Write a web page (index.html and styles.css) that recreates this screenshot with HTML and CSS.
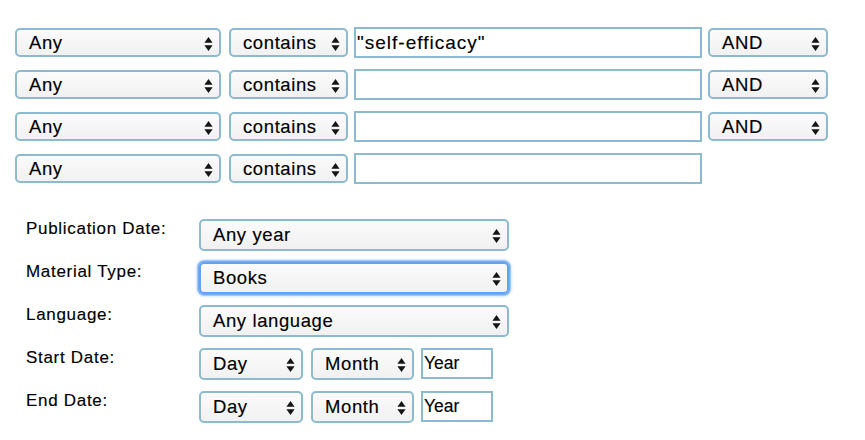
FILE: index.html
```html
<!DOCTYPE html>
<html>
<head>
<meta charset="utf-8">
<link rel="stylesheet" href="styles.css">
</head>
<body>
<div class="page">
  <div class="terms">
    <div class="row">
      <div class="sel w-field"><span>Any</span><svg class="arr" viewBox="0 0 8 13"><polygon points="0.2,5.3 4,0 7.8,5.3"/><polygon points="0.2,7.7 4,13 7.8,7.7"/></svg></div>
      <div class="sel w-op"><span>contains</span><svg class="arr" viewBox="0 0 8 13"><polygon points="0.2,5.3 4,0 7.8,5.3"/><polygon points="0.2,7.7 4,13 7.8,7.7"/></svg></div>
      <input class="txt w-term" type="text" value="&quot;self-efficacy&quot;">
      <div class="sel w-bool"><span>AND</span><svg class="arr" viewBox="0 0 8 13"><polygon points="0.2,5.3 4,0 7.8,5.3"/><polygon points="0.2,7.7 4,13 7.8,7.7"/></svg></div>
    </div>
    <div class="row">
      <div class="sel w-field"><span>Any</span><svg class="arr" viewBox="0 0 8 13"><polygon points="0.2,5.3 4,0 7.8,5.3"/><polygon points="0.2,7.7 4,13 7.8,7.7"/></svg></div>
      <div class="sel w-op"><span>contains</span><svg class="arr" viewBox="0 0 8 13"><polygon points="0.2,5.3 4,0 7.8,5.3"/><polygon points="0.2,7.7 4,13 7.8,7.7"/></svg></div>
      <input class="txt w-term" type="text" value="">
      <div class="sel w-bool"><span>AND</span><svg class="arr" viewBox="0 0 8 13"><polygon points="0.2,5.3 4,0 7.8,5.3"/><polygon points="0.2,7.7 4,13 7.8,7.7"/></svg></div>
    </div>
    <div class="row">
      <div class="sel w-field"><span>Any</span><svg class="arr" viewBox="0 0 8 13"><polygon points="0.2,5.3 4,0 7.8,5.3"/><polygon points="0.2,7.7 4,13 7.8,7.7"/></svg></div>
      <div class="sel w-op"><span>contains</span><svg class="arr" viewBox="0 0 8 13"><polygon points="0.2,5.3 4,0 7.8,5.3"/><polygon points="0.2,7.7 4,13 7.8,7.7"/></svg></div>
      <input class="txt w-term" type="text" value="">
      <div class="sel w-bool"><span>AND</span><svg class="arr" viewBox="0 0 8 13"><polygon points="0.2,5.3 4,0 7.8,5.3"/><polygon points="0.2,7.7 4,13 7.8,7.7"/></svg></div>
    </div>
    <div class="row">
      <div class="sel w-field"><span>Any</span><svg class="arr" viewBox="0 0 8 13"><polygon points="0.2,5.3 4,0 7.8,5.3"/><polygon points="0.2,7.7 4,13 7.8,7.7"/></svg></div>
      <div class="sel w-op"><span>contains</span><svg class="arr" viewBox="0 0 8 13"><polygon points="0.2,5.3 4,0 7.8,5.3"/><polygon points="0.2,7.7 4,13 7.8,7.7"/></svg></div>
      <input class="txt w-term" type="text" value="">
    </div>
  </div>

  <div class="limits">
    <div class="lab">Publication Date:</div>
    <div class="sel tall w-wide"><span>Any year</span><svg class="arr" viewBox="0 0 8 13"><polygon points="0.2,5.3 4,0 7.8,5.3"/><polygon points="0.2,7.7 4,13 7.8,7.7"/></svg></div>

    <div class="lab">Material Type:</div>
    <div class="sel tall w-wide focus"><span>Books</span><svg class="arr" viewBox="0 0 8 13"><polygon points="0.2,5.3 4,0 7.8,5.3"/><polygon points="0.2,7.7 4,13 7.8,7.7"/></svg></div>

    <div class="lab">Language:</div>
    <div class="sel tall w-wide"><span>Any language</span><svg class="arr" viewBox="0 0 8 13"><polygon points="0.2,5.3 4,0 7.8,5.3"/><polygon points="0.2,7.7 4,13 7.8,7.7"/></svg></div>

    <div class="lab">Start Date:</div>
    <div class="dates">
      <div class="sel tall w-day"><span>Day</span><svg class="arr" viewBox="0 0 8 13"><polygon points="0.2,5.3 4,0 7.8,5.3"/><polygon points="0.2,7.7 4,13 7.8,7.7"/></svg></div>
      <div class="sel tall w-month"><span>Month</span><svg class="arr" viewBox="0 0 8 13"><polygon points="0.2,5.3 4,0 7.8,5.3"/><polygon points="0.2,7.7 4,13 7.8,7.7"/></svg></div>
      <input class="txt w-year" type="text" value="Year">
    </div>

    <div class="lab">End Date:</div>
    <div class="dates">
      <div class="sel tall w-day"><span>Day</span><svg class="arr" viewBox="0 0 8 13"><polygon points="0.2,5.3 4,0 7.8,5.3"/><polygon points="0.2,7.7 4,13 7.8,7.7"/></svg></div>
      <div class="sel tall w-month"><span>Month</span><svg class="arr" viewBox="0 0 8 13"><polygon points="0.2,5.3 4,0 7.8,5.3"/><polygon points="0.2,7.7 4,13 7.8,7.7"/></svg></div>
      <input class="txt w-year" type="text" value="Year">
    </div>
  </div>
</div>
</body>
</html>
```

FILE: styles.css
```css
* { box-sizing: border-box; }

html, body {
  margin: 0;
  padding: 0;
  background: #ffffff;
}

body {
  font-family: "Liberation Sans", Arial, Helvetica, sans-serif;
  color: #000;
}

.page {
  padding: 27px 0 0 15px;
}

.terms {
  display: flex;
  flex-direction: column;
  gap: 11px;
}

.row {
  display: flex;
  align-items: center;
  height: 31px;
}

.sel {
  display: flex;
  align-items: center;
  justify-content: space-between;
  height: 29px;
  padding: 0 6px 0 12px;
  border: 2px solid #8ebacf;
  border-radius: 5px;
  background: linear-gradient(#fbfbfb, #f1f1f1);
  font-size: 18.5px;
  letter-spacing: 0.6px;
  white-space: nowrap;
  flex: none;
  -webkit-text-stroke: 0.15px #000;
}

.sel span {
  display: block;
  line-height: 20px;
}

.sel.tall {
  height: 32px;
}

.arr {
  display: block;
  width: 9px;
  height: 14px;
  flex: none;
  margin-top: 2px;
}

.arr polygon {
  fill: #151515;
}

.txt {
  display: block;
  height: 31px;
  margin: 0;
  padding: 0 2px 0 1px;
  border: 2px solid #8ebacf;
  border-radius: 0;
  background: #fff;
  font-family: "Liberation Sans", Arial, Helvetica, sans-serif;
  font-size: 19px;
  letter-spacing: 1px;
  color: #000;
  outline: none;
  flex: none;
  -webkit-text-stroke: 0.15px #000;
}

.w-field { width: 206px; margin-right: 8px; }
.w-op { width: 119px; margin-right: 6px; }
.w-term { width: 348px; margin-right: 6px; }
.w-bool { width: 120px; }

.limits {
  display: grid;
  grid-template-columns: 173px auto;
  grid-auto-rows: 32px;
  row-gap: 11px;
  margin: 35px 0 0 11px;
  align-items: start;
}

.lab {
  font-size: 17px;
  line-height: 19px;
  letter-spacing: 0.7px;
  -webkit-text-stroke: 0.15px #000;
}

.w-wide { width: 310px; }

.focus {
  border-color: #64a2ee;
  box-shadow: 0 0 0 1.5px #78aff2, 0 0 3px 2px rgba(110, 165, 235, 0.55);
}

.dates {
  display: flex;
  align-items: flex-start;
}

.w-day { width: 104px; margin-right: 8px; }
.w-month { width: 103px; margin-right: 7px; }

.w-year {
  width: 72px;
  font-size: 17.5px;
  letter-spacing: 0;
}
```
